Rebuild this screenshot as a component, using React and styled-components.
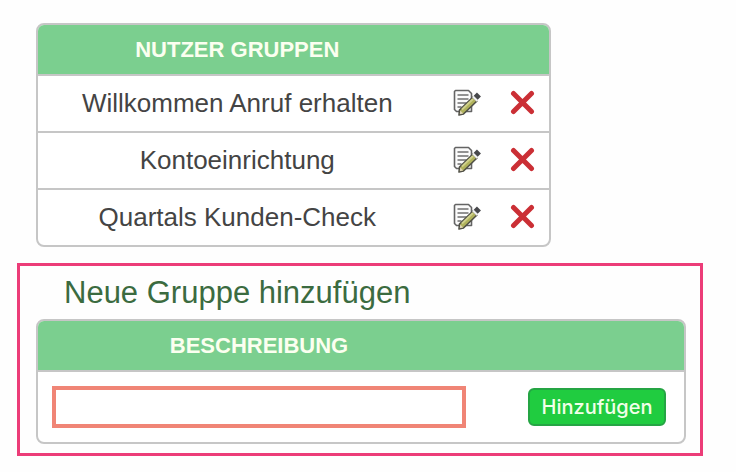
import { useState } from 'react';
import styled, { createGlobalStyle } from 'styled-components';

const GlobalStyle = createGlobalStyle`
    * {
        box-sizing: border-box;
    }
    body {
        margin: 0;
        background: #fefefe;
        color: #444;
        font-family: 'Liberation Sans', Arial, sans-serif;
        font-size: 26px;
    }
`;
const Page = styled.main`
    display: flex;
    flex-direction: column;
    gap: 16px;
    padding: 23px 33px 16px 17px;
`;
const GroupsSection = styled.section`
    width: 75%;
    margin-left: 19px;
`;
const NewGroupSection = styled.form`
    padding: 0 14px 9px 16px;
    border: 3px solid #ec3c78;
`;
const Title = styled.h2`
    margin: 0;
    padding: 0 28px;
    color: #3b6b40;
    font-size: 31px;
    font-weight: 400;
    line-height: 53px;
`;
const Table = styled.table`
    width: 100%;
    table-layout: fixed;
    border: 2px solid #c6c6c6;
    border-radius: 8px;
    border-spacing: 0;
    overflow: hidden;
    background: #fff;
`;
const Column = styled.col`
    width: ${({ $width }) => $width || 'auto'};
`;
const HeaderCell = styled.th`
    height: 49px;
    padding: 0;
    background: #7bcf8f;
    color: #fbfff0;
    font-size: 22px;
    line-height: 24px;
    text-transform: uppercase;
`;
const Cell = styled.td`
    height: 57px;
    padding: 0 0 2px;
    border-top: 2px solid #c6c6c6;
    text-align: center;
    line-height: 28px;
`;
const IconCell = styled(Cell)`
    line-height: 0;
`;
const FormCell = styled(Cell)`
    height: 72px;
    padding: 0 ${({ $gutter }) => $gutter};
    text-align: ${({ $align }) => $align || 'left'};
`;
const IconButton = styled.button`
    display: inline-flex;
    padding: 0;
    border: 0;
    background: none;
    vertical-align: top;
    cursor: pointer;
`;
const TextInput = styled.input`
    display: block;
    width: 100%;
    height: 42px;
    padding: 0 8px;
    border: 4px solid #f08576;
    background: #fff;
    color: inherit;
    font: inherit;
    font-size: 22px;
    outline: none;
`;
const AddButton = styled.button`
    display: inline-block;
    width: 138px;
    height: 38px;
    padding: 0;
    border: 2px solid #25a544;
    border-radius: 6px;
    background: #20cc40;
    color: #f2ffe9;
    font-family: Inter, sans-serif;
    font-size: 20px;
    font-weight: 500;
    line-height: 24px;
    vertical-align: top;
    cursor: pointer;
`;

const EditIcon = () => (
    <svg width="28" height="28" viewBox="0 0 28 28" aria-hidden="true">
        <path d="M2.500 1.500H15.500L18.500 4.500V22.500H3.500L1.500 20.500V2.500z" fill="#fbfbfb" stroke="#646464" strokeWidth="1.600" strokeLinejoin="round" />
        <path d="M4.500 6h11M4.500 10h11M4.500 14h9M4.500 18h4" stroke="#707070" strokeWidth="1.600" />
        <path d="M6 26l.5-5L20 8l4 4L10.500 25z" fill="#b0b25c" stroke="#505047" strokeWidth="1.600" strokeLinejoin="round" />
        <path d="M9 20.500L20 10" stroke="#d0d18c" strokeWidth="1.800" />
        <path d="M6.800 25.200l.4-3.700 3 3z" fill="#e0d6b8" />
        <path d="M20 7.500l4.500 4.500" stroke="#f0f0f0" strokeWidth="2.400" />
        <path d="M22.300 5.200l4 4" stroke="#47484b" strokeWidth="4.600" />
    </svg>
);

const DeleteIcon = () => (
    <svg width="26" height="26" viewBox="0 0 26 26" aria-hidden="true">
        <path d="M3.500 3.500l18 18M21.500 3.500L3.500 21.500" fill="none" stroke="#cb2f35" strokeWidth="5" strokeLinecap="round" />
    </svg>
);

const initialGroups = ['Willkommen Anruf erhalten', 'Kontoeinrichtung', 'Quartals Kunden-Check'];

const App = () => {
    const [groups, setGroups] = useState(initialGroups);
    const [description, setDescription] = useState('');

    const handleDelete = (index) => {
        setGroups(groups.filter((_, i) => i !== index));
    }

    const handleSubmit = (e) => {
        e.preventDefault();
        if (!description.trim()) return;
        setGroups([...groups, description.trim()]);
        setDescription('');
    }

    return (
        <Page>
            <GlobalStyle />
            <GroupsSection>
                <Table>
                    <colgroup>
                        <Column />
                        <Column $width="60px" />
                        <Column $width="52px" />
                    </colgroup>
                    <thead>
                        <tr>
                            <HeaderCell scope="col">Nutzer Gruppen</HeaderCell>
                            <HeaderCell as="td" colSpan={2} />
                        </tr>
                    </thead>
                    <tbody>
                        {groups.map((group, index) => (
                            <tr key={index}>
                                <Cell>{group}</Cell>
                                <IconCell>
                                    <IconButton type="button" aria-label={`${group} bearbeiten`}>
                                        <EditIcon />
                                    </IconButton>
                                </IconCell>
                                <IconCell>
                                    <IconButton type="button" aria-label={`${group} löschen`} onClick={() => { handleDelete(index) }}>
                                        <DeleteIcon />
                                    </IconButton>
                                </IconCell>
                            </tr>
                        ))}
                    </tbody>
                </Table>
            </GroupsSection>
            <NewGroupSection onSubmit={handleSubmit}>
                <Title>Neue Gruppe hinzufügen</Title>
                <Table>
                    <colgroup>
                        <Column />
                        <Column $width="204px" />
                    </colgroup>
                    <thead>
                        <tr>
                            <HeaderCell scope="col">
                                <label htmlFor="description">Beschreibung</label>
                            </HeaderCell>
                            <HeaderCell as="td" />
                        </tr>
                    </thead>
                    <tbody>
                        <tr>
                            <FormCell $gutter="14px">
                                <TextInput id="description" type="text" value={description} onChange={(e) => { setDescription(e.target.value) }} />
                            </FormCell>
                            <FormCell $gutter="18px" $align="right">
                                <AddButton type="submit">Hinzufügen</AddButton>
                            </FormCell>
                        </tr>
                    </tbody>
                </Table>
            </NewGroupSection>
        </Page>
    );
}

export default App;
